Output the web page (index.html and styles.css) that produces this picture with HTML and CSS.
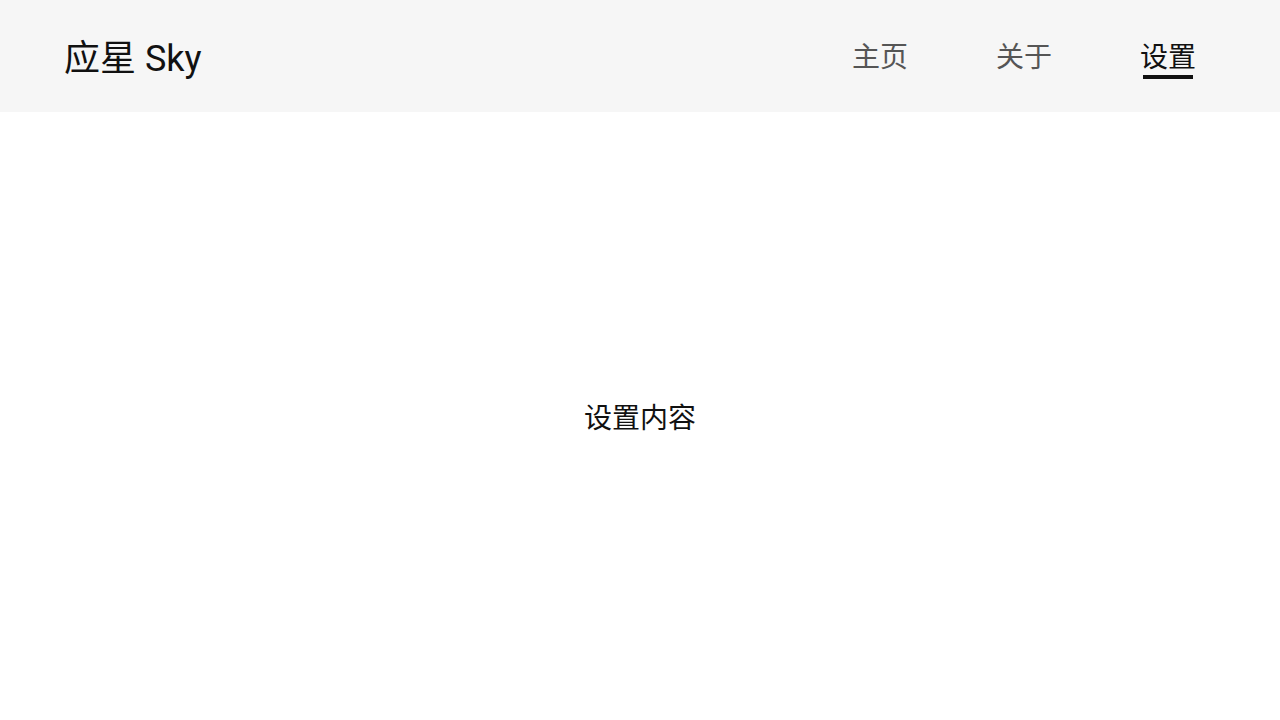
FILE: index.html
```html
<!DOCTYPE html>
<html lang="zh-CN">
<head>
<meta charset="utf-8">
<title>应星 Sky</title>
<link rel="stylesheet" href="styles.css">
</head>
<body>
<header class="topbar">
  <div class="logo">应星 Sky</div>
  <nav class="nav">
    <a class="nav-item">主页</a>
    <a class="nav-item">关于</a>
    <a class="nav-item active">设置</a>
  </nav>
</header>
<main class="content">
  <div class="content-text">设置内容</div>
</main>
</body>
</html>
```
FILE: styles.css
```css
* { box-sizing: border-box; }
html, body {
  margin: 0;
  padding: 0;
  height: 100%;
}
body {
  font-family: Roboto, "Noto Sans CJK SC", sans-serif;
  background: #ffffff;
  color: #111111;
  display: flex;
  flex-direction: column;
}
.topbar {
  height: 112px;
  flex: 0 0 112px;
  background: #f6f6f6;
  display: flex;
  align-items: center;
  justify-content: space-between;
  padding: 0 84px 0 64px;
}
.logo {
  font-size: 36px;
  line-height: 40px;
  color: #111111;
  margin-top: 6px;
}
.nav {
  display: flex;
  gap: 88px;
  align-items: center;
}
.nav-item {
  position: relative;
  font-size: 28px;
  line-height: 36px;
  color: #555555;
  text-decoration: none;
  cursor: pointer;
  padding-top: 3px;
}
.nav-item.active {
  color: #111111;
}
.nav-item.active::after {
  content: "";
  position: absolute;
  left: 3px;
  right: 3px;
  top: 38px;
  height: 4px;
  background: #111111;
}
.content {
  flex: 1;
  display: flex;
  align-items: center;
  justify-content: center;
}
.content-text {
  font-size: 28px;
  line-height: 36px;
  color: #111111;
  padding-top: 6px;
}
```
